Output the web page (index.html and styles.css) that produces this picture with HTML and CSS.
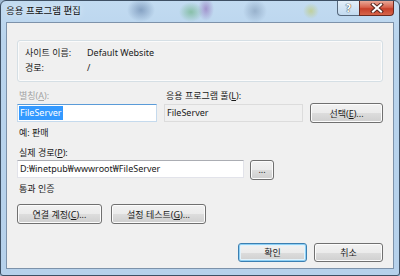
FILE: index.html
```html
<!DOCTYPE html>
<html lang="ko">
<head>
    <meta charset="UTF-8">
    <title>응용 프로그램 편집</title>
    <link rel="stylesheet" href="styles.css">
</head>
<body>
    <div class="window">
        <div class="titlebar">
            <span class="title">응용 프로그램 편집</span>
            <div class="caption-buttons">
                <span class="cap-btn help">?</span>
                <span class="cap-btn close">
                    <svg width="14" height="10" viewBox="0 0 14 10">
                        <path d="M3 1.5 L11 8.5 M11 1.5 L3 8.5" stroke="#5a2a22" stroke-width="4" stroke-linecap="square"/>
                        <path d="M3 1.5 L11 8.5 M11 1.5 L3 8.5" stroke="#fff" stroke-width="2" stroke-linecap="square"/>
                    </svg>
                </span>
            </div>
        </div>

        <div class="client">
            <div class="groupbox">
                <div class="info-row"><span class="info-label">사이트 이름:</span><span>Default Website</span></div>
                <div class="info-row"><span class="info-label">경로:</span><span>/</span></div>
            </div>

            <div class="alias-grid">
                <label class="field-label disabled">별칭(<u>A</u>):</label>
                <label class="field-label">응용 프로그램 풀(<u>L</u>):</label>
                <span></span>
                <div class="textbox focused"><span class="selected">FileServer</span></div>
                <div class="textbox readonly">FileServer</div>
                <button class="btn">선택(<u>E</u>)...</button>
            </div>

            <div class="hint">예: 판매</div>

            <label class="field-label path-label">실제 경로(<u>P</u>):</label>
            <div class="path-row">
                <div class="textbox path-box">D:₩inetpub₩wwwroot₩FileServer</div>
                <button class="btn browse">...</button>
            </div>

            <div class="auth-label">통과 인증</div>
            <div class="action-row">
                <button class="btn connect">연결 계정(<u>C</u>)...</button>
                <button class="btn test">설정 테스트(<u>G</u>)...</button>
            </div>

            <div class="footer">
                <button class="btn default">확인</button>
                <button class="btn">취소</button>
            </div>
        </div>
    </div>
</body>
</html>
```

FILE: styles.css
```css
body {
    margin: 0;
    width: 400px;
    height: 276px;
    overflow: hidden;
    font-family: "Noto Sans", "Noto Sans CJK KR", sans-serif;
    font-size: 9px;
    color: #1a1a1a;
    background: #9fb9d2;
}

.window {
    box-sizing: border-box;
    width: 400px;
    height: 276px;
    border: 1px solid #3e5064;
    border-radius: 6px 6px 3px 3px;
    padding: 0 5px 6px 5px;
    display: flex;
    flex-direction: column;
    background:
        radial-gradient(ellipse 14px 12px at 140px 9px, rgba(95, 125, 165, 0.6), transparent),
        radial-gradient(ellipse 12px 10px at 190px 11px, rgba(90, 170, 110, 0.55), transparent),
        radial-gradient(ellipse 8px 12px at 205px 8px, rgba(130, 80, 170, 0.5), transparent),
        radial-gradient(ellipse 12px 12px at 254px 10px, rgba(120, 145, 175, 0.55), transparent),
        radial-gradient(ellipse 8px 8px at 310px 10px, rgba(190, 200, 90, 0.55), transparent),
        linear-gradient(#c2dbf1, #b9d4ed 40px, #b6d1eb);
}

.titlebar {
    height: 21px;
    flex-shrink: 0;
    display: flex;
    justify-content: space-between;
    align-items: flex-start;
}

.title {
    padding-top: 3px;
    font-size: 9.5px;
    line-height: 14px;
    color: #111;
    text-shadow: 0 0 6px rgba(255, 255, 255, 0.9);
}

.caption-buttons {
    display: flex;
}

.cap-btn {
    box-sizing: border-box;
    height: 15px;
    display: flex;
    align-items: center;
    justify-content: center;
    border: 1px solid #56687c;
    border-top: none;
}

.help {
    width: 22px;
    border-right: none;
    border-radius: 0 0 0 4px;
    background: linear-gradient(rgba(255, 255, 255, 0.55), rgba(200, 220, 238, 0.3));
    font-family: "DejaVu Sans", sans-serif;
    font-size: 10px;
    font-weight: bold;
    color: #fff;
    text-shadow: 0 0 1px #333, 0 0 1px #333;
}

.close {
    width: 35px;
    border-color: #6b2a20;
    border-radius: 0 0 4px 0;
    background: linear-gradient(#e9a897, #d8634d 45%, #c7402a 55%, #d6654a);
}

.client {
    flex: 1;
    background: #f0f0f0;
    border: 1px solid #7d92aa;
    padding: 0 10px;
}

.groupbox {
    margin-top: 17px;
    height: 42px;
    box-sizing: border-box;
    border: 1px solid #d5dfe5;
    border-radius: 3px;
    box-shadow: inset 0 0 0 1px #fbfbfb;
    padding: 4px 7px 0 7px;
}

.info-row {
    display: flex;
    line-height: 15px;
}

.info-label {
    width: 62px;
}

.alias-grid {
    display: grid;
    grid-template-columns: 140px 139px 73px;
    column-gap: 7px;
    align-items: center;
    margin-top: 6px;
}

.field-label {
    display: block;
    padding-left: 2px;
    line-height: 15px;
}

.field-label u,
.btn u {
    text-decoration-thickness: 1px;
    text-underline-offset: 1px;
}

.disabled {
    color: #a3a3a3;
}

.textbox {
    box-sizing: border-box;
    height: 18px;
    line-height: 16px;
    padding: 0 2px;
    background: #fff;
    border: 1px solid #e2e3ea;
    border-top-color: #abadb3;
    white-space: nowrap;
}

.textbox.focused {
    padding: 0 1px;
    border-color: #c5daed;
    border-top-color: #5a9bd8;
}

.textbox.readonly {
    background: #f0f0f0;
    border-color: #dcdcdc;
}

.selected {
    display: inline-block;
    vertical-align: top;
    margin-top: 1px;
    padding: 0 1px;
    line-height: 14px;
    background: #3399ff;
    color: #fff;
}

.btn {
    box-sizing: border-box;
    height: 20px;
    font: inherit;
    color: #1a1a1a;
    padding: 0;
    border: 1px solid #707070;
    border-radius: 3px;
    background: linear-gradient(#f2f2f2, #ebebeb 50%, #dddddd 50%, #cfcfcf);
    box-shadow: inset 0 0 0 1px #fcfcfc;
}

.btn.default {
    border-color: #3c7fb1;
    box-shadow: inset 0 0 0 1px #8ed0f5, inset 0 0 0 2px #e2f2fb;
}

.hint {
    margin-top: 2px;
    padding-left: 2px;
    line-height: 15px;
}

.path-label {
    margin-top: 5px;
}

.path-row {
    display: flex;
    align-items: flex-start;
    gap: 6px;
}

.path-box {
    width: 227px;
}

.browse {
    width: 24px;
    line-height: 14px;
}

.auth-label {
    margin-top: 1px;
    padding-left: 2px;
    line-height: 15px;
}

.action-row {
    display: flex;
    gap: 9px;
    margin-top: 8px;
}

.connect {
    width: 85px;
}

.test {
    width: 95px;
}

.footer {
    display: flex;
    justify-content: flex-end;
    gap: 7px;
    margin-top: 19px;
}

.footer .btn {
    width: 69px;
    height: 19px;
}
```
